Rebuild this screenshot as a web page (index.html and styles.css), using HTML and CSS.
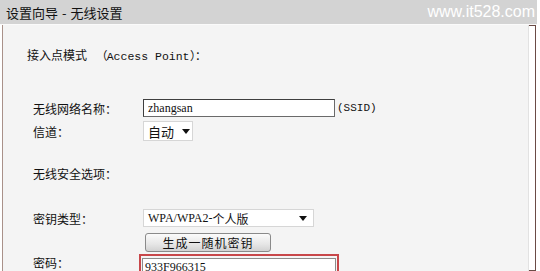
FILE: index.html
```html
<!DOCTYPE html>
<html lang="zh-CN">
<head>
    <meta charset="UTF-8">
    <title>设置向导 - 无线设置</title>
    <link rel="stylesheet" href="styles.css">
</head>
<body>
    <div class="title-bar">
        <span class="title">设置向导<span class="dash">-</span>无线设置</span>
        <span class="watermark">www.it528.com</span>
    </div>

    <div class="panel">
        <p class="mode">接入点模式 <span class="latin">（Access Point）：</span></p>

        <div class="row row-ssid">
            <span class="label">无线网络名称：</span>
            <input class="text-input ssid" type="text" value="zhangsan">
            <span class="latin suffix">(SSID)</span>
        </div>

        <div class="row row-channel">
            <span class="label">信道：</span>
            <div class="dropdown channel">
                <span>自动</span>
                <svg class="caret" width="8" height="5" viewBox="0 0 8 5"><path d="M0 0h8L4 5z" fill="#111"/></svg>
            </div>
        </div>

        <p class="section">无线安全选项：</p>

        <div class="row row-keytype">
            <span class="label">密钥类型：</span>
            <div class="dropdown keytype">
                <span class="latin">WPA/WPA2-</span><span>个人版</span>
                <svg class="caret push" width="8" height="5" viewBox="0 0 8 5"><path d="M0 0h8L4 5z" fill="#111"/></svg>
            </div>
        </div>

        <div class="row row-button">
            <span class="label"></span>
            <button class="gen-btn" type="button">生成一随机密钥</button>
        </div>

        <div class="row row-pass">
            <span class="label">密码：</span>
            <div class="highlight">
                <input class="text-input pass" type="text" value="933F966315">
            </div>
        </div>
    </div>
</body>
</html>
```

FILE: styles.css
```css
html, body {
    height: 271px;
    overflow: hidden;
}

body {
    margin: 0;
    background-color: #fff;
    font-family: "Noto Sans CJK SC", sans-serif;
    font-size: 12px;
    color: #111;
}

.title-bar {
    width: 537px;
    height: 24px;
    background-color: #d3d3d3;
    display: flex;
    align-items: center;
    justify-content: space-between;
    border-bottom: 1px solid #fafafa;
}

.title {
    padding-left: 6px;
    font-size: 13px;
    color: #111;
}

.dash {
    margin: 0 4px;
}

.watermark {
    font-family: "Liberation Sans", Arial, sans-serif;
    font-size: 16px;
    color: #fff;
    padding-right: 2px;
}

.panel {
    width: 527px;
    height: 246px;
    margin-left: 2px;
    padding: 22px 0 0 24px;
    box-sizing: border-box;
    overflow: hidden;
    background-color: #f4f4f4;
    border-left: 1px solid #a99189;
    border-right: 1px solid #e2e2e2;
    box-shadow: 7px 0 0 -1px #fff, 7px 0 0 0 #6b4b46;
}

.latin {
    font-family: "Liberation Mono", monospace;
    font-size: 11px;
}

.mode {
    margin: 0;
    line-height: 16px;
}

.mode .latin {
    margin-left: 6px;
    font-size: 11.5px;
}

.row {
    display: flex;
    align-items: center;
    padding-left: 6px;
}

.label {
    width: 110px;
    flex-shrink: 0;
}

.row-ssid {
    margin-top: 34px;
    height: 18px;
}

.row-channel {
    margin-top: 4px;
    height: 20px;
}

.section {
    margin: 25px 0 0 6px;
    line-height: 16px;
}

.row-keytype {
    margin-top: 27px;
    height: 18px;
}

.row-button {
    margin-top: 6px;
    height: 19px;
}

.row-pass {
    margin-top: 2px;
    height: 24px;
    align-items: flex-start;
}

.text-input {
    box-sizing: border-box;
    height: 18px;
    margin: 0;
    padding: 0 4px;
    background-color: #fff;
    border: 1px solid #6a6a6a;
    border-top-color: #3e3e3e;
    border-left-color: #3e3e3e;
    font-family: "Liberation Serif", serif;
    font-size: 12px;
    color: #111;
    outline: none;
}

.ssid {
    width: 192px;
}

.suffix {
    margin-left: 2px;
}

.dropdown {
    box-sizing: border-box;
    display: flex;
    align-items: center;
    background-color: #fff;
    border: 1px solid #d6d6d6;
}

.channel {
    width: 50px;
    height: 20px;
    padding-left: 4px;
    font-size: 13px;
}

.channel .caret {
    margin-left: 8px;
}

.keytype {
    width: 171px;
    height: 18px;
    padding: 0 6px 0 4px;
    font-size: 12px;
}

.keytype .latin {
    font-family: "Liberation Serif", serif;
    font-size: 12px;
}

.push {
    margin-left: auto;
}

.gen-btn {
    width: 126px;
    height: 19px;
    margin-left: 2px;
    padding: 0;
    border: 1px solid #8a8a8a;
    border-radius: 3px;
    background: linear-gradient(#fbfbfb, #e6e6e6 60%, #d2d2d2);
    font-family: "Noto Sans CJK SC", sans-serif;
    font-size: 12px;
    letter-spacing: 1px;
    line-height: 17px;
    color: #111;
}

.highlight {
    margin-left: -4px;
    width: 200px;
    height: 24px;
    box-sizing: border-box;
    border: 2px solid #c8474a;
    padding: 1px;
}

.pass {
    width: 100%;
    height: 20px;
    padding-left: 2px;
    border: 1px solid #8c8c8c;
}
```
